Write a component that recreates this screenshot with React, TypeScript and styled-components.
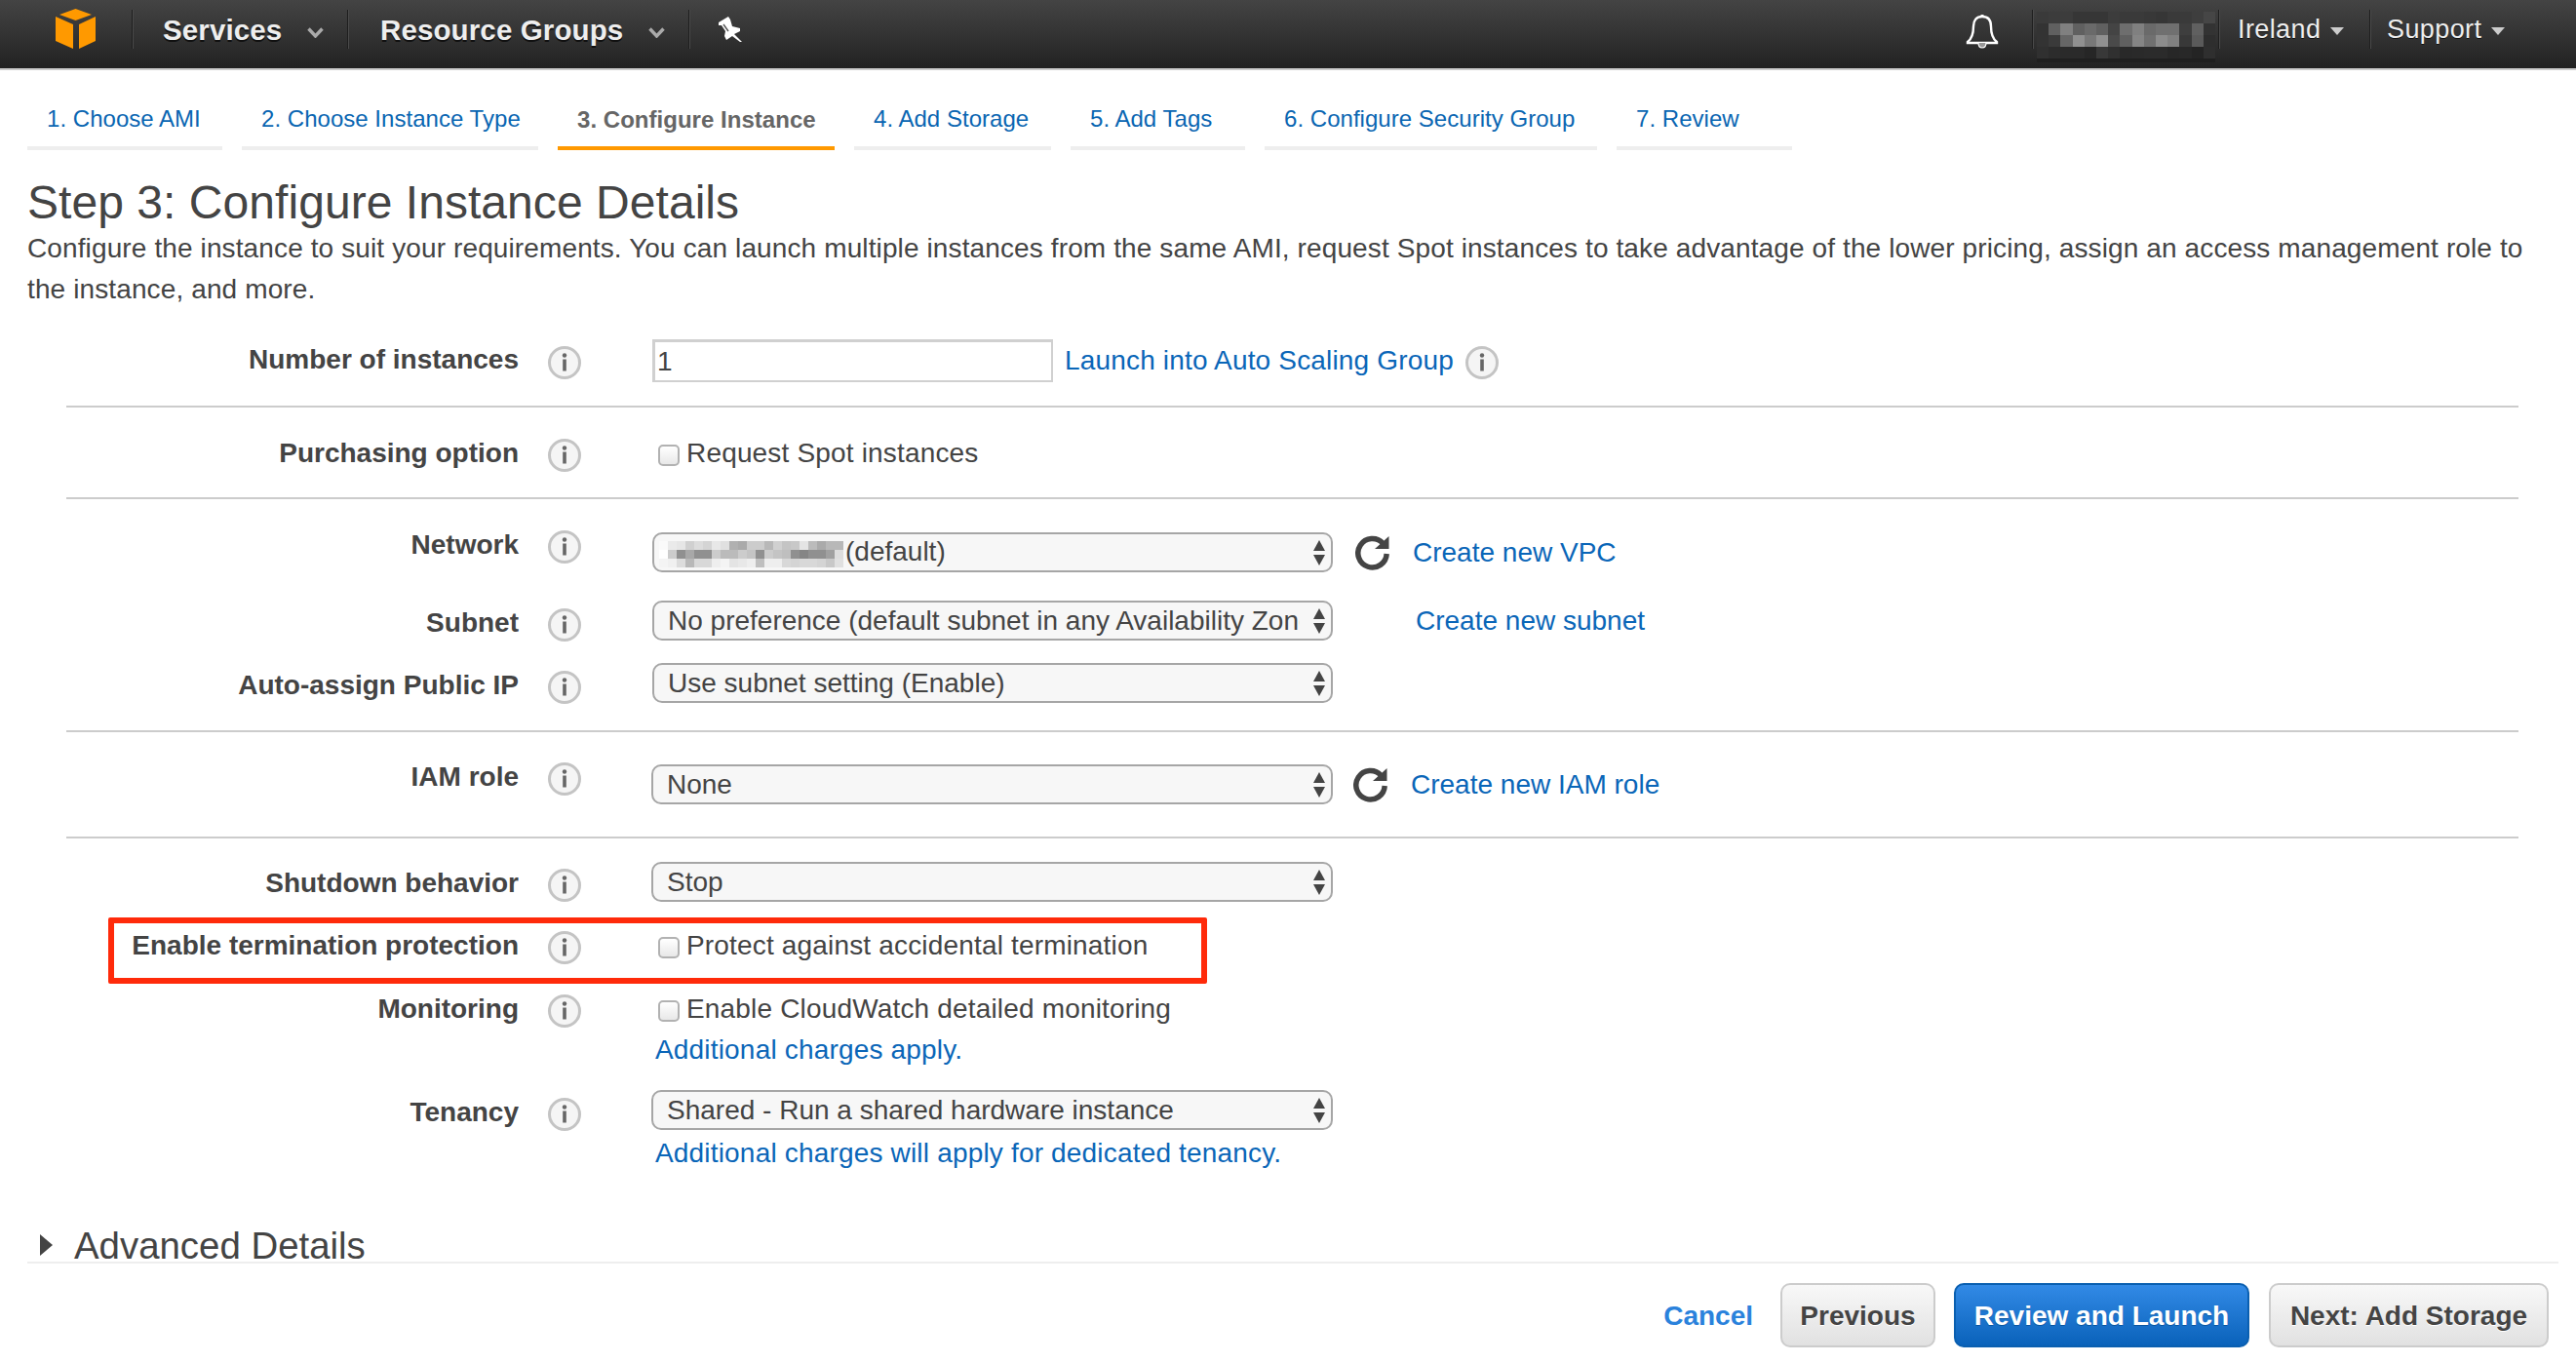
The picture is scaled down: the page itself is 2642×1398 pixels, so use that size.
import React from "react";
import styled, { createGlobalStyle } from "styled-components";

const Global = createGlobalStyle`
  html, body { margin: 0; padding: 0; background: #fff; }
  * { box-sizing: border-box; }
`;

const Page = styled.div`
  width: 2642px;
  height: 1398px;
  overflow: hidden;
  display: flex;
  flex-direction: column;
  font-family: "Liberation Sans", Arial, sans-serif;
  color: #444;
  background: #fff;
`;

/* ---------- top bar ---------- */
const Nav = styled.header`
  flex: none;
  height: 72px;
  display: flex;
  align-items: flex-start;
  background: linear-gradient(#444, #222);
  background-size: 100% 70px;
  background-repeat: no-repeat;
  border-bottom: 2px solid #ccc;
`;
const NavLogo = styled.div`
  width: 135px;
  height: 70px;
  padding: 9px 0 0 57px;
`;
const NavSep = styled.span`
  flex: none;
  width: 2px;
  height: 40px;
  margin-top: 10px;
  background: linear-gradient(90deg, #1e1e1e 50%, #4a4a4a 50%);
`;
const NavMenu = styled.div<{ $w: number; $pl: number }>`
  flex: none;
  width: ${(p) => p.$w}px;
  height: 70px;
  padding-left: ${(p) => p.$pl}px;
  display: flex;
  align-items: flex-start;
  color: #eee;
  font-size: 29.5px;
  font-weight: 700;
  letter-spacing: 0.12px;
  line-height: 62px;
  text-shadow: 0 2px 0 #111;
  white-space: nowrap;
`;
const NavChevron = styled.svg`
  flex: none;
  margin: 28px 0 0 26px;
`;
const NavPin = styled.div`
  flex: none;
  padding: 17px 0 0 28px;
`;
const NavSpacer = styled.div`
  flex: 1;
`;
const NavBell = styled.div`
  flex: none;
  width: 68px;
  padding-top: 14px;
`;
const NavAccount = styled.div`
  flex: none;
  width: 189px;
  height: 70px;
  padding: 12px 0 0 3px;
`;
const NavAccountShade = styled.div`
  width: 183px;
  height: 4px;
  background: #1f1f1f;
`;
const NavRight = styled.div<{ $w: number; $pl: number }>`
  flex: none;
  width: ${(p) => p.$w}px;
  height: 70px;
  padding-left: ${(p) => p.$pl}px;
  display: flex;
  align-items: flex-start;
  color: #eee;
  font-size: 27px;
  letter-spacing: 0.4px;
  line-height: 61px;
  text-shadow: 0 1px 0 #111;
  white-space: nowrap;
`;
const NavCaret = styled.span`
  flex: none;
  width: 0;
  height: 0;
  margin: 28px 0 0 10px;
  border-left: 7px solid transparent;
  border-right: 7px solid transparent;
  border-top: 8px solid #ccc;
`;

/* ---------- wizard tabs ---------- */
const Tabs = styled.nav`
  flex: none;
  display: flex;
  gap: 20px;
  margin-top: 26px;
  padding-left: 28px;
`;
const Tab = styled.a<{ $active?: boolean; $w: number }>`
  display: block;
  flex: none;
  width: ${(p) => p.$w}px;
  height: 56px;
  padding: ${(p) => (p.$active ? 1 : 0)}px 0 0 20px;
  border-bottom: 4px solid ${(p) => (p.$active ? "#f90" : "#eee")};
  color: ${(p) => (p.$active ? "#666" : "#0a66b2")};
  font-size: 24px;
  font-weight: ${(p) => (p.$active ? 700 : 400)};
  letter-spacing: 0.03px;
  line-height: 48px;
  white-space: nowrap;
`;

/* ---------- heading ---------- */
const Main = styled.main`
  flex: 1;
  padding: 27px 0 0 28px;
  min-height: 0;
`;
const Title = styled.h1`
  margin: 0;
  font-size: 48px;
  font-weight: 400;
  letter-spacing: 0.05px;
  line-height: 53px;
  color: #444;
`;
const Lead = styled.p`
  margin: 0;
  width: 2575px;
  font-size: 28px;
  letter-spacing: 0.12px;
  line-height: 42px;
`;

/* ---------- form ---------- */
const Form = styled.form`
  margin: 30px 59px 0 40px;
`;
const Divider = styled.hr<{ $before: number; $after: number }>`
  height: 2px;
  border: 0;
  margin: ${(p) => p.$before}px 0 ${(p) => p.$after}px;
  background: #ccc;
`;
const Row = styled.div<{ $h?: number; $mt?: number; $lt?: number; $ct?: number; $it?: number }>`
  position: relative;
  display: grid;
  grid-template-columns: 464px 137px 1fr;
  min-height: ${(p) => p.$h ?? 41}px;
  margin-top: ${(p) => p.$mt ?? 0}px;
  --lt: ${(p) => p.$lt ?? 5}px;
  --ct: ${(p) => p.$ct ?? 0}px;
  --it: ${(p) => p.$it ?? 3}px;
`;
const Label = styled.label`
  padding-top: var(--lt);
  font-size: 28px;
  font-weight: 700;
  line-height: 36px;
  text-align: right;
  white-space: nowrap;
`;
const InfoCell = styled.div`
  height: 0;
  padding: calc(var(--lt) + var(--it)) 0 0 30px;
`;
const Control = styled.div`
  padding-top: var(--ct);
  min-width: 0;
`;
const Line = styled.div`
  display: flex;
  align-items: center;
`;
const Text = styled.span`
  font-size: 28px;
  letter-spacing: 0.17px;
  line-height: 36px;
  white-space: nowrap;
`;
const Link = styled.a<{ $ml?: number; $ls?: number }>`
  margin-left: ${(p) => p.$ml ?? 0}px;
  color: #0a66b8;
  font-size: 28px;
  letter-spacing: ${(p) => p.$ls ?? 0}px;
  line-height: 36px;
  white-space: nowrap;
`;
const NoteLink = styled.a`
  display: block;
  margin: 6px 0 0 3px;
  color: #0a66b8;
  font-size: 28px;
  letter-spacing: 0.18px;
  line-height: 36px;
  white-space: nowrap;
`;
const NumberInput = styled.input`
  width: 411px;
  height: 44px;
  padding: 0 2px;
  border: 3px solid #d0d0d0;
  border-right-width: 2px;
  border-bottom-width: 2px;
  background: #fff;
  font: 28px "Liberation Sans", Arial, sans-serif;
  color: #444;
  outline: none;
`;
const Check = styled.span`
  flex: none;
  width: 22px;
  height: 22px;
  margin: 3px 7px 0 6px;
  border: 2px solid #b2b2b2;
  border-radius: 5px;
  background: linear-gradient(#fff, #e8e8e8);
`;
const SelectWrap = styled.div<{ $wide?: boolean }>`
  position: relative;
  flex: none;
  width: ${(p) => (p.$wide ? 699 : 698)}px;
  height: 41px;
  margin-left: ${(p) => (p.$wide ? -1 : 0)}px;
`;
const Select = styled.select`
  appearance: none;
  -webkit-appearance: none;
  display: block;
  width: 100%;
  height: 100%;
  padding: 0 32px 0 14px;
  border: 2px solid #a6a6a6;
  border-radius: 10px;
  background: #f7f7f7;
  color: #444;
  font: 28px "Liberation Sans", Arial, sans-serif;
  outline: none;
`;
const Spinner = styled.svg`
  position: absolute;
  top: 8px;
  right: 7px;
  pointer-events: none;
`;
const Masked = styled.svg`
  position: absolute;
  top: 9px;
  left: 7px;
  pointer-events: none;
`;
const MaskedText = styled.span`
  position: absolute;
  top: 2px;
  left: 198px;
  font-size: 28px;
  line-height: 36px;
  pointer-events: none;
`;
const Highlight = styled.div`
  position: absolute;
  top: 0;
  left: 43px;
  width: 1127px;
  height: 68px;
  border: 6px solid #ff2a0a;
  border-radius: 2px;
  pointer-events: none;
`;
const RefreshSlot = styled.svg<{ $ml: number }>`
  flex: none;
  display: block;
  margin-left: ${(p) => p.$ml}px;
`;
const InfoIcon = styled.svg`
  display: block;
  flex: none;
`;
const TrailingInfo = styled.span`
  flex: none;
  display: flex;
  margin: 4px 0 0 12px;
`;

/* ---------- advanced + footer ---------- */
const Advanced = styled.div`
  height: 34px;
  margin-top: 60px;
  padding-left: 13px;
  display: flex;
  align-items: flex-start;
`;
const AdvancedArrow = styled.span`
  flex: none;
  width: 0;
  height: 0;
  margin-top: 5px;
  border-top: 11px solid transparent;
  border-bottom: 11px solid transparent;
  border-left: 13px solid #444;
`;
const AdvancedTitle = styled.span`
  margin-left: 22px;
  font-size: 38.4px;
  line-height: 34px;
  white-space: nowrap;
`;
const Footer = styled.footer`
  flex: none;
  height: 104px;
  margin: 0 18px 0 28px;
  padding: 20px 10px 0 0;
  border-top: 2px solid #eee;
  display: flex;
  justify-content: flex-end;
  align-items: flex-start;
  gap: 20px;
`;
const Cancel = styled.a`
  margin-right: 8px;
  color: #2a82dc;
  font-size: 28px;
  font-weight: 700;
  line-height: 68px;
`;
const Btn = styled.button<{ $primary?: boolean; $w: number; $mr?: number }>`
  width: ${(p) => p.$w}px;
  height: 66px;
  margin-right: ${(p) => p.$mr ?? 0}px;
  padding: 2px 0 0;
  border: 2px solid ${(p) => (p.$primary ? "#0a5fb0" : "#ccc")};
  border-radius: 10px;
  background: ${(p) =>
    p.$primary ? "linear-gradient(#328ae6, #0a62ba)" : "linear-gradient(#f8f8f8, #e1e1e1)"};
  color: ${(p) => (p.$primary ? "#fff" : "#444")};
  font: 700 28px "Liberation Sans", Arial, sans-serif;
  text-shadow: ${(p) => (p.$primary ? "0 1px 0 #0a55a0" : "0 1px 0 #fff")};
`;

/* ---------- drawings ---------- */
const AwsLogo = () => (
  <svg width="41" height="41" viewBox="0 0 41 41">
    <path d="M20.5 0 37 6 20.5 12 4 6z" fill="#f90" />
    <path d="M0 8l18 8v25L0 33z" fill="#f90" />
    <path d="M41 8l-17 8v25l17-8z" fill="#f90" />
  </svg>
);
const Chevron = () => (
  <NavChevron width="17" height="11" viewBox="0 0 17 11">
    <path d="M1.5 1.5 8.5 9l7-7.5" fill="none" stroke="#aaa" strokeWidth="3.4" />
  </NavChevron>
);
const Pin = () => (
  <svg width="26" height="27" viewBox="0 0 26 27">
    <path d="M1 6 11 0l2 3 2 7 8 2v3l-6 3 8 8-2 0-8-6-6 4-2-4 1-5-4-6H1z" fill="#fff" />
    <path d="M6 8l5 7" stroke="#555" strokeWidth="1.4" />
  </svg>
);
const Bell = () => (
  <svg width="34" height="36" viewBox="0 0 34 36">
    <path
      d="M17 3c-6 0-9 4-9 10 0 8-2 13-6 16v1h30v-1c-4-3-6-8-6-16 0-6-3-10-9-10z"
      fill="none"
      stroke="#fff"
      strokeWidth="2.4"
    />
    <path d="M15.5 3V1h3v2z" fill="#fff" />
    <path d="M13 30c0 4 2 5 4 5s4-1 4-5" fill="#999" stroke="#fff" strokeWidth="1.2" />
  </svg>
);
const Info = () => (
  <InfoIcon width="34" height="34" viewBox="0 0 34 34">
    <circle cx="17" cy="17" r="15.5" fill="#f5f5f5" stroke="#c4c4c4" strokeWidth="3" />
    <circle cx="17" cy="9.5" r="2.2" fill="#666" />
    <rect x="15.2" y="13.5" width="3.6" height="12" fill="#666" />
  </InfoIcon>
);
const Arrows = () => (
  <Spinner width="14" height="26" viewBox="0 0 14 26">
    <path d="M7 0 13 11H1z" fill="#444" />
    <path d="M7 26 13 15H1z" fill="#444" />
  </Spinner>
);
const Refresh = ({ ml }: { ml: number }) => (
  <RefreshSlot $ml={ml} width="36" height="36" viewBox="0 0 36 36">
    <path d="M28.5 8.5A14.7 14.7 0 1 0 32.2 19" fill="none" stroke="#444" strokeWidth="5.5" />
    <path d="M20 14H34.5V1z" fill="#444" />
  </RefreshSlot>
);

const accountCells = [
  ["#3a3a3a", "#3c3c3c", "#3c3c3c", "#363636", "#363636", "#363636", "#3c3c3c", "#3a3a3a", "#3a3a3a", "#383838", "#363636", "#3a3a3a", "#3a3a3a", "#3e3e3e", "#464646"],
  ["#333333", "#606060", "#808080", "#606060", "#6a6a6a", "#606060", "#444444", "#6e6e6e", "#808080", "#6a6a6a", "#707070", "#707070", "#3e3e3e", "#606060", "#333333"],
  ["#333333", "#3a3a3a", "#666666", "#909090", "#787878", "#909090", "#4a4a4a", "#606060", "#858585", "#707070", "#8c8c8c", "#808080", "#383838", "#5a5a5a", "#2e2e2e"],
  ["#303030", "#2c2c2c", "#2a2a2a", "#2a2a2a", "#262626", "#383838", "#303030", "#292929", "#2a2a2a", "#2b2b2b", "#2b2b2b", "#272727", "#282828", "#242424", "#2f2f2f"],
];
const networkCells = [
  ["#fafafa", "#eaeaea", "#e6e6e6", "#d0d0d0", "#dcdcdc", "#d4d4d4", "#e8e8e8", "#e0e0e0", "#b0b0b0", "#aaaaaa", "#cccccc", "#cccccc", "#b8b8b8", "#d0d0d0", "#c4c4c4", "#c8c8c8", "#e4e4e4", "#bbbbbb", "#aaaaaa", "#b8b8b8", "#b8b8b8"],
  ["#ffffff", "#cccccc", "#909090", "#a8a8a8", "#909090", "#909090", "#cccccc", "#bbbbbb", "#bbbbbb", "#cccccc", "#c4c4c4", "#909090", "#cccccc", "#c4c4c4", "#bfbfbf", "#909090", "#858585", "#909090", "#909090", "#a0a0a0", "#dddddd"],
  ["#f4f4f4", "#f0f0f0", "#dcdcdc", "#b8b8b8", "#d8d8d8", "#d8d8d8", "#eeeeee", "#f4f4f4", "#e4e4e4", "#e8e8e8", "#eeeeee", "#bfbfbf", "#eeeeee", "#eeeeee", "#d8d8d8", "#d4d4d4", "#d8d8d8", "#d8d8d8", "#d4d4d4", "#c8c8c8", "#e0e0e0"],
];

const Mosaic = ({ cells, w, h }: { cells: string[][]; w: number; h: number }) => (
  <svg width={cells[0].length * w} height={cells.length * h} shapeRendering="crispEdges" display="block">
    {cells.flatMap((row, y) =>
      row.map((c, x) => <rect key={`${x}-${y}`} x={x * w} y={y * h} width={w} height={h} fill={c} />)
    )}
  </svg>
);

const Dropdown = ({ value, wide }: { value: string; wide?: boolean }) => (
  <SelectWrap $wide={wide}>
    <Select defaultValue={value}>
      <option>{value}</option>
    </Select>
    <Arrows />
  </SelectWrap>
);

const Field = ({ label }: { label: string }) => (
  <>
    <Label>{label}</Label>
    <InfoCell>
      <Info />
    </InfoCell>
  </>
);

export default function App() {
  return (
    <Page>
      <Global />
      <Nav>
        <NavLogo>
          <AwsLogo />
        </NavLogo>
        <NavSep />
        <NavMenu $w={219} $pl={30}>
          Services
          <Chevron />
        </NavMenu>
        <NavSep />
        <NavMenu $w={348} $pl={32}>
          Resource Groups
          <Chevron />
        </NavMenu>
        <NavSep />
        <NavPin>
          <Pin />
        </NavPin>
        <NavSpacer />
        <NavBell>
          <Bell />
        </NavBell>
        <NavSep />
        <NavAccount>
          <Mosaic cells={accountCells} w={12.2} h={12} />
          <NavAccountShade />
        </NavAccount>
        <NavSep />
        <NavRight $w={153} $pl={18}>
          Ireland
          <NavCaret />
        </NavRight>
        <NavSep />
        <NavRight $w={210} $pl={16}>
          Support
          <NavCaret />
        </NavRight>
      </Nav>

      <Tabs>
        <Tab $w={200}>1. Choose AMI</Tab>
        <Tab $w={304}>2. Choose Instance Type</Tab>
        <Tab $w={284} $active>
          3. Configure Instance
        </Tab>
        <Tab $w={202}>4. Add Storage</Tab>
        <Tab $w={179}>5. Add Tags</Tab>
        <Tab $w={341}>6. Configure Security Group</Tab>
        <Tab $w={180}>7. Review</Tab>
      </Tabs>

      <Main>
        <Title>Step 3: Configure Instance Details</Title>
        <Lead>
          Configure the instance to suit your requirements. You can launch multiple instances from the same AMI, request
          Spot instances to take advantage of the lower pricing, assign an access management role to the instance, and
          more.
        </Lead>

        <Form>
          <Row $h={44} $lt={3} $it={4}>
            <Field label="Number of instances" />
            <Control>
              <Line>
                <NumberInput defaultValue="1" />
                <Link $ml={12} $ls={0.17}>
                  Launch into Auto Scaling Group
                </Link>
                <TrailingInfo>
                  <Info />
                </TrailingInfo>
              </Line>
            </Control>
          </Row>
          <Divider $before={24} $after={23} />
          <Row $h={48} $lt={6} $ct={6}>
            <Field label="Purchasing option" />
            <Control>
              <Line>
                <Check />
                <Text>Request Spot instances</Text>
              </Line>
            </Control>
          </Row>
          <Divider $before={21} $after={24} />
          <Row $h={51} $lt={5} $ct={10}>
            <Field label="Network" />
            <Control>
              <Line>
                <SelectWrap>
                  <Select aria-label="Network" />
                  <Masked width="189" height="27" viewBox="0 0 189 27">
                    <Mosaic cells={networkCells} w={9} h={9} />
                  </Masked>
                  <MaskedText>(default)</MaskedText>
                  <Arrows />
                </SelectWrap>
                <Refresh ml={23} />
                <Link $ml={23}>Create new VPC</Link>
              </Line>
            </Control>
          </Row>
          <Row $mt={29}>
            <Field label="Subnet" />
            <Control>
              <Line>
                <Dropdown value="No preference (default subnet in any Availability Zone)" />
                <Link $ml={85}>Create new subnet</Link>
              </Line>
            </Control>
          </Row>
          <Row $mt={23}>
            <Field label="Auto-assign Public IP" />
            <Control>
              <Dropdown value="Use subnet setting (Enable)" />
            </Control>
          </Row>
          <Divider $before={28} $after={24} />
          <Row $h={50} $lt={4} $ct={9}>
            <Field label="IAM role" />
            <Control>
              <Line>
                <Dropdown value="None" wide />
                <Refresh ml={21} />
                <Link $ml={23}>Create new IAM role</Link>
              </Line>
            </Control>
          </Row>
          <Divider $before={33} $after={24} />
          <Row $lt={4}>
            <Field label="Shutdown behavior" />
            <Control>
              <Dropdown value="Stop" wide />
            </Control>
          </Row>
          <Row $mt={16} $h={68} $lt={11} $ct={11}>
            <Field label="Enable termination protection" />
            <Control>
              <Line>
                <Check />
                <Text>Protect against accidental termination</Text>
              </Line>
            </Control>
            <Highlight />
          </Row>
          <Row $lt={8} $ct={8}>
            <Field label="Monitoring" />
            <Control>
              <Line>
                <Check />
                <Text>Enable CloudWatch detailed monitoring</Text>
              </Line>
              <NoteLink>Additional charges apply.</NoteLink>
            </Control>
          </Row>
          <Row $mt={23}>
            <Field label="Tenancy" />
            <Control>
              <Dropdown value="Shared - Run a shared hardware instance" wide />
              <NoteLink>Additional charges will apply for dedicated tenancy.</NoteLink>
            </Control>
          </Row>
        </Form>

        <Advanced>
          <AdvancedArrow />
          <AdvancedTitle>Advanced Details</AdvancedTitle>
        </Advanced>
      </Main>

      <Footer>
        <Cancel>Cancel</Cancel>
        <Btn $w={159} $mr={-1}>
          Previous
        </Btn>
        <Btn $w={303} $primary>
          Review and Launch
        </Btn>
        <Btn $w={287}>Next: Add Storage</Btn>
      </Footer>
    </Page>
  );
}
